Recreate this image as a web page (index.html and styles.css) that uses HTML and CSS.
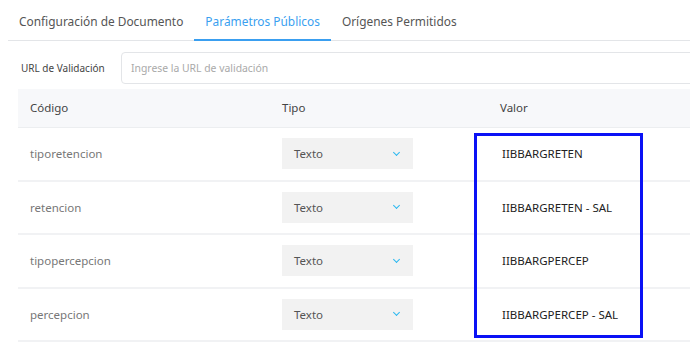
FILE: index.html
```html
<!DOCTYPE html>
<html lang="es">
<head>
  <meta charset="UTF-8" />
  <meta name="viewport" content="width=device-width, initial-scale=1.0"/>
  <title>Parámetros Públicos</title>
  <link rel="stylesheet" href="styles.css">
</head>
<body>
  <div class="page">
    <nav class="tabs">
      <div class="tab">Configuración de Documento</div>
      <div class="tab active">Parámetros Públicos</div>
      <div class="tab">Orígenes Permitidos</div>
    </nav>

    <div class="url-row">
      <label for="url">URL de Validación</label>
      <input type="text" id="url" placeholder="Ingrese la URL de validación">
    </div>

    <div class="table-wrap">
      <table class="params">
        <thead>
          <tr>
            <th class="col-code">Código</th>
            <th class="col-type">Tipo</th>
            <th>Valor</th>
          </tr>
        </thead>
        <tbody>
          <tr>
            <td class="code">tiporetencion</td>
            <td><div class="select">Texto <span class="chev"></span></div></td>
            <td class="value">IIBBARGRETEN</td>
          </tr>
          <tr>
            <td class="code">retencion</td>
            <td><div class="select">Texto <span class="chev"></span></div></td>
            <td class="value">IIBBARGRETEN - SAL</td>
          </tr>
          <tr>
            <td class="code">tipopercepcion</td>
            <td><div class="select">Texto <span class="chev"></span></div></td>
            <td class="value">IIBBARGPERCEP</td>
          </tr>
          <tr>
            <td class="code">percepcion</td>
            <td><div class="select">Texto <span class="chev"></span></div></td>
            <td class="value">IIBBARGPERCEP - SAL</td>
          </tr>
        </tbody>
      </table>
      <!-- highlight over the value column -->
      <div class="highlight"></div>
    </div>
  </div>
</body>
</html>
```

FILE: styles.css
```css
* { box-sizing: border-box; }

body {
  margin: 0;
  font-family: 'Noto Sans', sans-serif;
  background: #fff;
  color: #333;
}

.page {
  padding-left: 8px;
  overflow: hidden;
}

.tabs {
  display: flex;
  height: 41px;
  border-bottom: 1px solid #e3e5e8;
}

.tab {
  padding: 13px 11px 0;
  font-size: 11.9px;
  color: #555;
  white-space: nowrap;
}

.tab.active {
  color: #3a9ff0;
  border-bottom: 2px solid #3a9ff0;
  margin-bottom: -1px;
}

.url-row {
  display: flex;
  align-items: center;
  padding: 11px 0 0 13px;
  margin-right: -12px;
}

.url-row label {
  width: 100px;
  font-size: 10px;
  color: #444;
}

.url-row input {
  flex: 1;
  height: 32px;
  border: 1px solid #e3e5e8;
  border-radius: 4px;
  padding: 0 9px;
  font-family: inherit;
  font-size: 10.4px;
}

.url-row input::placeholder { color: #a9a9a9; }

.table-wrap {
  position: relative;
  margin: 5px 0 0 10px;
}

.params {
  width: 100%;
  border-collapse: collapse;
  font-size: 11.5px;
}

.params th {
  background: #f7f8fa;
  height: 38px;
  text-align: left;
  font-weight: 400;
  color: #444;
  padding: 0 12px;
  border-bottom: 1px solid #eceef0;
}

.col-code { width: 252px; }
.col-type { width: 218px; }

.params td {
  height: 53.5px;
  padding: 0 12px;
  border-bottom: 2px solid #f1f2f4;
}

.code { color: #777; }

.select {
  width: 131px;
  height: 31px;
  background: #f2f2f2;
  display: flex;
  align-items: center;
  justify-content: space-between;
  padding: 0 14px 0 12px;
  color: #555;
}

.chev {
  width: 5px;
  height: 5px;
  border-right: 1.5px solid #2bb8f0;
  border-bottom: 1.5px solid #2bb8f0;
  transform: rotate(45deg);
  margin-top: -3px;
}

.value {
  color: #222;
  padding-left: 14px !important;
}

.highlight {
  position: absolute;
  left: 456px;
  top: 44px;
  width: 169px;
  height: 205px;
  border: 3.5px solid #0a12f5;
}
```
